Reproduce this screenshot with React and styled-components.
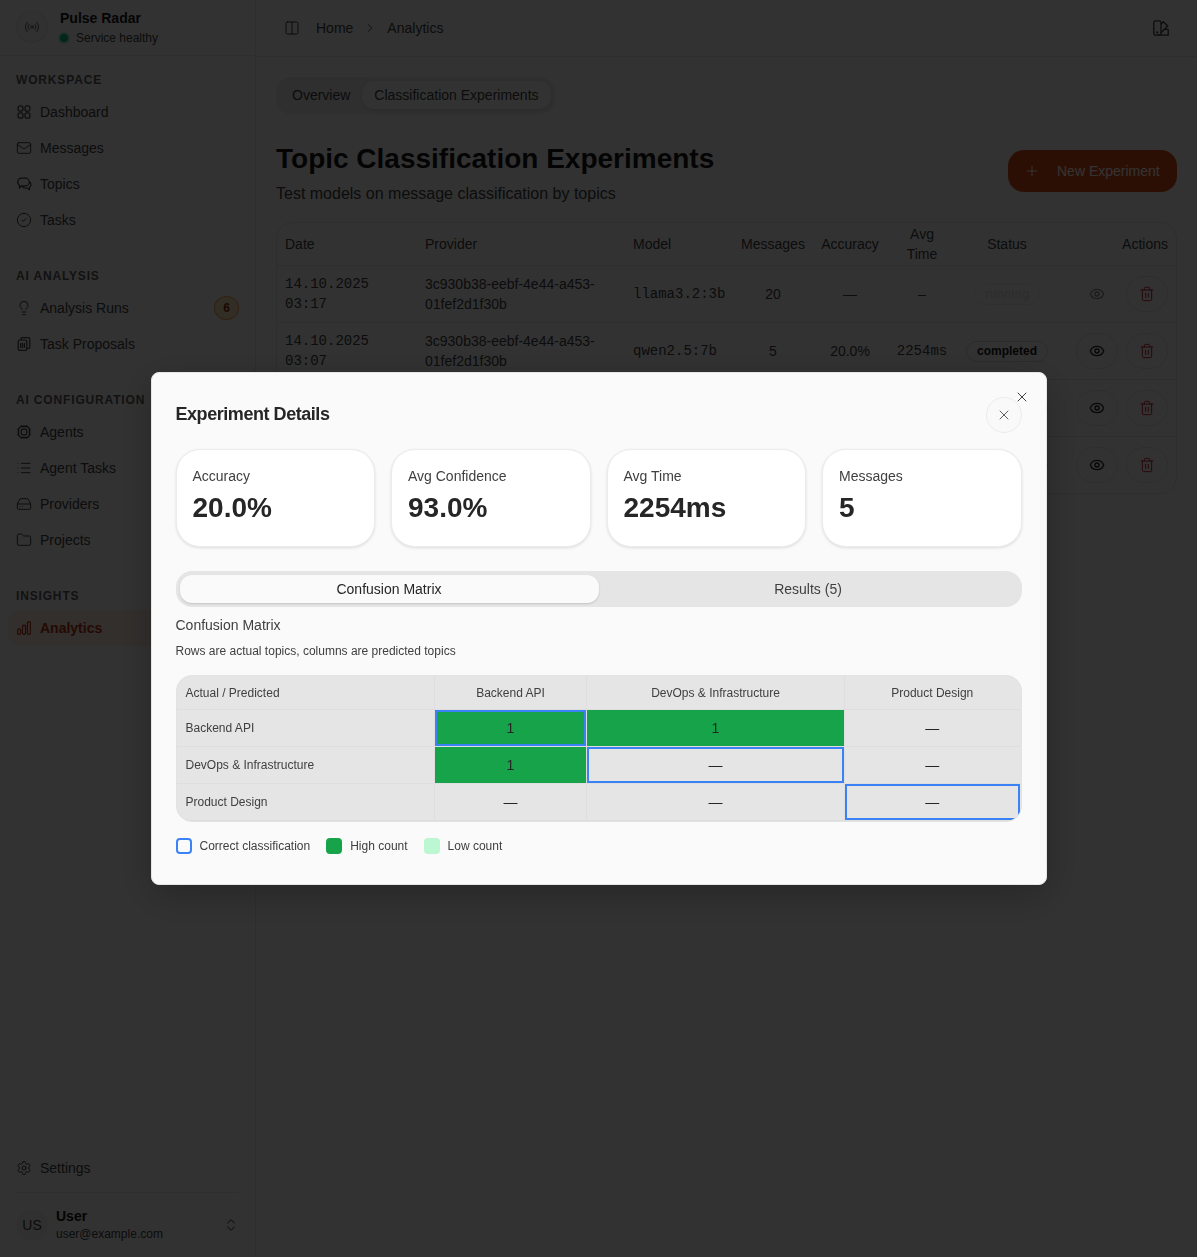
import React from 'react'
import styled, { createGlobalStyle } from 'styled-components'
import {
  Mail, CircleCheck, Lightbulb, List, HardDrive, Folder, Settings, ChevronsUpDown,
  ChevronRight, Columns2, Plus, Eye, Trash2, X, Radio,
} from 'lucide-react'

const Global = createGlobalStyle`
  html, body { margin: 0; padding: 0; height: 100%; }
  body {
    background: #fafafa;
    color: #262626;
    font-family: "Liberation Sans", Arial, sans-serif;
    overflow: hidden;
  }
  * { box-sizing: border-box; }
`

const Shell = styled.div`
  display: flex;
  height: 1257px;
`

const Sidebar = styled.aside`
  width: 256px;
  flex: none;
  display: flex;
  flex-direction: column;
  border-right: 1px solid #e5e5e5;
`

const Brand = styled.div`
  height: 56px;
  padding: 11px 16px 0;
  display: flex;
  gap: 12px;
  border-bottom: 1px solid #e5e5e5;
`

const LogoCircle = styled.div`
  width: 32px;
  height: 32px;
  border-radius: 50%;
  background: #f5f5f5;
  border: 1px solid #f2dcd4;
  display: flex;
  align-items: center;
  justify-content: center;
  color: #404040;
`

const BrandText = styled.div`
  display: flex;
  flex-direction: column;
  margin-top: -1px;
`

const BrandName = styled.div`
  font-size: 14px;
  line-height: 16px;
  font-weight: 700;
  color: #171717;
`

const Health = styled.div`
  display: flex;
  align-items: center;
  gap: 8px;
  font-size: 12px;
  line-height: 16px;
  margin-top: 4px;
  color: #404040;
`

const HealthDot = styled.span`
  width: 8px;
  height: 8px;
  border-radius: 50%;
  background: #10b981;
  box-shadow: 0 0 0 2px #a7f3d0;
`

const NavArea = styled.nav`
  display: flex;
  flex-direction: column;
  padding-top: 16px;
`

const Group = styled.div`
  margin-bottom: 30px;
`

const GroupLabel = styled.div`
  height: 16px;
  line-height: 16px;
  padding-left: 16px;
  font-size: 12px;
  font-weight: 700;
  letter-spacing: 0.84px;
  color: #5c5c5c;
  margin-bottom: 6px;
  white-space: nowrap;
`

const NavItem = styled.div`
  height: 36px;
  margin: 0 8px;
  padding: 0 8px;
  border-radius: 12px;
  display: flex;
  align-items: center;
  gap: 8px;
  font-size: 14px;
  color: ${p => (p.$active ? '#b8330f' : '#404040')};
  font-weight: ${p => (p.$active ? 700 : 400)};
  background: ${p => (p.$active ? '#f9e8e1' : 'transparent')};
`

const CountBadge = styled.span`
  margin-left: auto;
  width: 25px;
  height: 24px;
  border-radius: 50%;
  background: #f59e0b44;
  border: 1px solid #f97316aa;
  font-size: 12px;
  font-weight: 700;
  color: #7c2d12;
  display: flex;
  align-items: center;
  justify-content: center;
`

const SideFooter = styled.div`
  margin-top: auto;
  padding-bottom: 14px;
`

const FooterRule = styled.div`
  height: 1px;
  margin: 6px 16px 14px;
  background: #e5e5e5;
`

const UserRow = styled.div`
  display: flex;
  align-items: center;
  padding: 0 16px;
  gap: 8px;
`

const Avatar = styled.div`
  width: 32px;
  height: 32px;
  border-radius: 50%;
  background: #f0f0f0;
  font-size: 14px;
  color: #404040;
  display: flex;
  align-items: center;
  justify-content: center;
`

const UserText = styled.div`
  flex: 1;
  display: flex;
  flex-direction: column;
`

const UserName = styled.div`
  font-size: 14px;
  line-height: 18px;
  font-weight: 700;
  color: #171717;
`

const UserMail = styled.div`
  font-size: 12px;
  line-height: 18px;
  color: #404040;
`

const Main = styled.main`
  flex: 1;
  min-width: 0;
  display: flex;
  flex-direction: column;
`

const TopBar = styled.header`
  height: 57px;
  flex: none;
  padding: 0 28px;
  display: flex;
  align-items: center;
  border-bottom: 1px solid #e5e5e5;
  color: #404040;
  font-size: 14px;
`

const Crumbs = styled.div`
  display: flex;
  align-items: center;
  margin-left: 16px;
  gap: 10px;
  flex: 1;
`

const Content = styled.div`
  padding: 20px 20px 0;
`

const PageTabs = styled.div`
  display: inline-flex;
  padding: 4px;
  height: 36px;
  border-radius: 16px;
  background: #e8e8e8;
  box-shadow: 0 1px 3px rgba(0, 0, 0, 0.1);
`

const PageTab = styled.div`
  padding: 0 12px;
  display: flex;
  align-items: center;
  font-size: 14px;
  border-radius: 12px;
  color: #404040;
  background: ${p => (p.$active ? '#fafafa' : 'transparent')};
  box-shadow: ${p => (p.$active ? '0 1px 3px rgba(0,0,0,.12)' : 'none')};
`

const TitleRow = styled.div`
  display: flex;
  align-items: flex-start;
  justify-content: space-between;
  margin-top: 30px;
`

const PageTitle = styled.h1`
  margin: 0;
  font-size: 28px;
  line-height: 32px;
  font-weight: 700;
  color: #171717;
`

const PageSub = styled.p`
  margin: 7px 0 0;
  font-size: 16px;
  line-height: 24px;
  color: #404040;
`

const NewButton = styled.div`
  margin-top: 7px;
  height: 42px;
  width: 169px;
  padding: 0 16px;
  border-radius: 16px;
  background: #dc4c14;
  color: #fff;
  font-size: 14px;
  display: flex;
  align-items: center;
  gap: 17px;
`

const TableCard = styled.div`
  margin-top: 16px;
  border: 1px solid #e5e5e5;
  border-radius: 16px;
  overflow: hidden;
`

const DataTable = styled.table`
  width: 100%;
  table-layout: fixed;
  border-collapse: collapse;
  font-size: 14px;
  color: #404040;
`

const Th = styled.th`
  height: 42px;
  padding: 0 ${p => (p.$align === 'right' ? '9px' : '8px')} 0 8px;
  font-weight: 400;
  line-height: 20px;
  text-align: ${p => p.$align || 'center'};
  border-bottom: 1px solid #e5e5e5;
`

const Td = styled.td`
  height: 57px;
  padding: 8px ${p => (p.$actions ? '9px' : '8px')} 8px 8px;
  line-height: 20px;
  text-align: ${p => p.$align || 'center'};
  border-bottom: ${p => (p.$last ? 'none' : '1px solid #e5e5e5')};
  font-family: ${p => (p.$mono ? '"Liberation Mono", monospace' : 'inherit')};
  white-space: ${p => (p.$nowrap ? 'nowrap' : 'normal')};
  overflow-wrap: anywhere;
`

const StatusPill = styled.span`
  display: inline-block;
  padding: 2px 10px;
  height: 21px;
  line-height: 15px;
  border: 1px solid #d4d4d4;
  border-radius: 999px;
  font-size: 12px;
  font-weight: 700;
  color: ${p => (p.$dim ? '#c4c4c4' : '#171717')};
  opacity: ${p => (p.$dim ? 0.4 : 1)};
`

const Actions = styled.div`
  display: flex;
  justify-content: flex-end;
  gap: 8px;
`

const IconBtn = styled.div`
  width: 42px;
  height: 36px;
  border-radius: 18px;
  border: 1px solid ${p => (p.$off ? 'transparent' : '#e3e3e3')};
  display: flex;
  align-items: center;
  justify-content: center;
  color: ${p => (p.$danger ? '#c81e2e' : '#262626')};
  opacity: ${p => (p.$off ? 0.5 : 1)};
`

const Overlay = styled.div`
  position: fixed;
  inset: 0;
  background: rgba(0, 0, 0, 0.8);
  display: flex;
  align-items: center;
  justify-content: center;
`

const Dialog = styled.div`
  position: relative;
  width: 896px;
  height: 513px;
  padding: 24px;
  border-radius: 8px;
  background: #fafafa;
  border: 1px solid #e5e5e5;
  box-shadow: 0 10px 40px rgba(0, 0, 0, 0.25);
`

const CornerClose = styled.div`
  position: absolute;
  top: 16px;
  right: 16px;
  width: 16px;
  height: 16px;
  display: flex;
  color: #404040;
`

const DialogHead = styled.div`
  display: flex;
  align-items: center;
  justify-content: space-between;
  height: 36px;
`

const DialogTitle = styled.h2`
  margin: 0 0 1px;
  font-size: 18px;
  font-weight: 700;
  letter-spacing: -0.45px;
  color: #262626;
`

const RoundClose = styled.div`
  width: 36px;
  height: 36px;
  border-radius: 50%;
  background: #f9f9f9;
  border: 1px solid #ececec;
  display: flex;
  align-items: center;
  justify-content: center;
  color: #404040;
`

const Stats = styled.div`
  display: grid;
  grid-template-columns: repeat(4, 1fr);
  gap: 16px;
  margin-top: 16px;
`

const StatCard = styled.div`
  height: 98px;
  padding: 16px;
  border-radius: 24px;
  background: #fff;
  border: 1px solid #ececec;
  box-shadow: 0 1px 3px rgba(0, 0, 0, 0.12);
`

const StatLabel = styled.div`
  font-size: 14px;
  line-height: 20px;
  color: #404040;
`

const StatValue = styled.div`
  font-size: 28px;
  line-height: 32px;
  font-weight: 700;
  margin-top: 6px;
  color: #262626;
`

const DialogTabs = styled.div`
  display: grid;
  grid-template-columns: 1fr 1fr;
  height: 36px;
  padding: 4px;
  margin-top: 24px;
  border-radius: 16px;
  background: #e5e5e5;
`

const DialogTab = styled.div`
  display: flex;
  align-items: center;
  justify-content: center;
  font-size: 14px;
  border-radius: 12px;
  color: ${p => (p.$active ? '#262626' : '#404040')};
  background: ${p => (p.$active ? '#fafafa' : 'transparent')};
  box-shadow: ${p => (p.$active ? '0 1px 2px rgba(0,0,0,.15)' : 'none')};
`

const MatrixTitle = styled.div`
  margin-top: 10px;
  font-size: 14px;
  line-height: 16px;
  color: #404040;
`

const MatrixSub = styled.div`
  margin-top: 10px;
  font-size: 12px;
  line-height: 16px;
  color: #404040;
`

const MatrixWrap = styled.div`
  margin-top: 16px;
  width: 846px;
  border: 1px solid #e2e2e2;
  border-radius: 16px;
  overflow: hidden;
  background: #e5e5e5;
`

const Matrix = styled.table`
  width: 843px;
  table-layout: fixed;
  border-collapse: collapse;
  font-size: 12px;
  color: #404040;
`

const MatrixHead = styled.th`
  height: 33px;
  padding: 1px 9px 0;
  font-weight: 400;
  text-align: ${p => (p.$left ? 'left' : 'center')};
  border-left: ${p => (p.$left ? 'none' : '1px solid #dedede')};
  border-bottom: 1px solid #dedede;
`

const RowHead = styled.td`
  height: 37px;
  padding: 0 9px;
  border-bottom: 1px solid #dedede;
`

const Cell = styled.td`
  height: 37px;
  padding: 0;
  text-align: center;
  font-size: 14px;
  color: #262626;
  border-left: 1px solid #dedede;
  border-bottom: 1px solid #dedede;
  background: ${p => (p.$count ? '#16a34a' : 'transparent')};
  box-shadow: ${p => (p.$correct ? 'inset 0 0 0 2px #3b82f6' : 'none')};
`

const Legend = styled.div`
  display: flex;
  align-items: center;
  gap: 16px;
  margin-top: 16px;
  font-size: 12px;
  color: #404040;
`

const LegendItem = styled.div`
  display: flex;
  align-items: center;
  gap: 8px;
`

const Swatch = styled.span`
  width: 16px;
  height: 16px;
  border-radius: 4px;
  background: ${p => p.$fill};
  border: 2px solid ${p => p.$line};
`

// hand drawn where lucide has no close match
const DashIcon = () => (
  <svg width="16" height="16" viewBox="0 0 16 16" fill="none" stroke="currentColor" strokeWidth="1.2">
    <rect x="2" y="1.8" width="5" height="5.4" rx="2" />
    <rect x="9" y="1.8" width="5" height="5.4" rx="2" />
    <rect x="2" y="8.8" width="5" height="5.4" rx="2" />
    <rect x="9" y="8.8" width="5" height="5.4" rx="2" />
  </svg>
)

const TopicsIcon = () => (
  <svg width="16" height="16" viewBox="0 0 16 16" fill="none" stroke="currentColor" strokeWidth="1.2" strokeLinejoin="round">
    <path d="M5.6 2.2h3.9a3.8 3.8 0 0 1 0 7.6H5.8l-2.3 2.2V9.2A3.8 3.8 0 0 1 5.6 2.2z" />
    <path d="M6.2 9.9c.4 1.3 1.5 2.1 2.9 2.1h2l2.4 1.8v-2.4c.9-.6 1.5-1.6 1.5-2.8 0-1.3-.7-2.4-1.8-3" />
  </svg>
)

const ProposalIcon = () => (
  <svg width="16" height="16" viewBox="0 0 16 16" fill="none" stroke="currentColor" strokeWidth="1.2">
    <rect x="2.2" y="4" width="8.6" height="10.4" rx="1.4" />
    <path d="M5 4V2.8c0-.7.5-1.2 1.2-1.2h6c.9 0 1.6.7 1.6 1.6v8c0 .7-.5 1.2-1.2 1.2h-1.8" />
    <path d="M4.6 7v5M6.5 7v5M8.4 7v5" />
  </svg>
)

const AgentIcon = () => (
  <svg width="16" height="16" viewBox="0 0 16 16" fill="none" stroke="currentColor" strokeWidth="1.2">
    <rect x="2.6" y="2.6" width="10.8" height="10.8" rx="3" />
    <rect x="5.2" y="5.2" width="5.6" height="5.6" rx="1.6" />
    <path d="M5.5 1v1.6M8 1v1.6M10.5 1v1.6M5.5 13.4V15M8 13.4V15M10.5 13.4V15M1 5.5h1.6M1 8h1.6M1 10.5h1.6M13.4 5.5H15M13.4 8H15M13.4 10.5H15" />
  </svg>
)

const BarsIcon = () => (
  <svg width="16" height="16" viewBox="0 0 16 16" fill="none" stroke="currentColor" strokeWidth="1.2">
    <rect x="1.6" y="8.8" width="3" height="5.6" rx="1.4" />
    <rect x="6.5" y="5.2" width="3" height="9.2" rx="1.4" />
    <rect x="11.4" y="1.6" width="3" height="12.8" rx="1.4" />
  </svg>
)

const SwatchIcon = () => (
  <svg width="16" height="16" viewBox="0 0 16 16" fill="none" stroke="currentColor" strokeWidth="1.3" strokeLinejoin="round">
    <rect x="0.8" y="0.8" width="7.2" height="14.4" rx="1.6" />
    <path d="M8 4.4 10.4 1.8 14.6 6 8 12.8" />
    <path d="M11.4 9.4h3.8v5.8H4.4" />
    <circle cx="4.2" cy="12.4" r="0.5" fill="currentColor" />
  </svg>
)

const navGroups = [
  {
    label: 'WORKSPACE',
    items: [
      { name: 'Dashboard', icon: <DashIcon /> },
      { name: 'Messages', icon: <Mail size={16} strokeWidth={1.5} /> },
      { name: 'Topics', icon: <TopicsIcon /> },
      { name: 'Tasks', icon: <CircleCheck size={16} strokeWidth={1.5} /> },
    ],
  },
  {
    label: 'AI ANALYSIS',
    items: [
      { name: 'Analysis Runs', icon: <Lightbulb size={16} strokeWidth={1.5} />, badge: 6 },
      { name: 'Task Proposals', icon: <ProposalIcon /> },
    ],
  },
  {
    label: 'AI CONFIGURATION',
    items: [
      { name: 'Agents', icon: <AgentIcon /> },
      { name: 'Agent Tasks', icon: <List size={16} strokeWidth={1.5} /> },
      { name: 'Providers', icon: <HardDrive size={16} strokeWidth={1.5} /> },
      { name: 'Projects', icon: <Folder size={16} strokeWidth={1.5} /> },
    ],
  },
  {
    label: 'INSIGHTS',
    items: [{ name: 'Analytics', icon: <BarsIcon />, active: true }],
  },
]

const experiments = [
  { date: '14.10.2025 03:17', model: 'llama3.2:3b', messages: 20, accuracy: '—', time: '–', status: 'running', off: true },
  { date: '14.10.2025 03:07', model: 'qwen2.5:7b', messages: 5, accuracy: '20.0%', time: '2254ms', status: 'completed' },
  { date: '14.10.2025 02:58', model: 'qwen2.5:7b', messages: 5, accuracy: '20.0%', time: '2254ms', status: 'completed' },
  { date: '14.10.2025 02:41', model: 'llama3.2:3b', messages: 5, accuracy: '20.0%', time: '2254ms', status: 'completed' },
]

const stats = [
  ['Accuracy', '20.0%'],
  ['Avg Confidence', '93.0%'],
  ['Avg Time', '2254ms'],
  ['Messages', '5'],
]

const topics = ['Backend API', 'DevOps & Infrastructure', 'Product Design']
const counts = [
  [1, 1, 0],
  [1, 0, 0],
  [0, 0, 0],
]

export default function App() {
  return (
    <>
      <Global />
      <Shell>
        <Sidebar>
          <Brand>
            <LogoCircle><Radio size={16} strokeWidth={1.25} /></LogoCircle>
            <BrandText>
              <BrandName>Pulse Radar</BrandName>
              <Health><HealthDot />Service healthy</Health>
            </BrandText>
          </Brand>
          <NavArea>
            {navGroups.map(group => (
              <Group key={group.label}>
                <GroupLabel>{group.label}</GroupLabel>
                {group.items.map(item => (
                  <NavItem key={item.name} $active={item.active}>
                    {item.icon}
                    {item.name}
                    {item.badge && <CountBadge>{item.badge}</CountBadge>}
                  </NavItem>
                ))}
              </Group>
            ))}
          </NavArea>
          <SideFooter>
            <NavItem><Settings size={16} strokeWidth={1.5} />Settings</NavItem>
            <FooterRule />
            <UserRow>
              <Avatar>US</Avatar>
              <UserText>
                <UserName>User</UserName>
                <UserMail>user@example.com</UserMail>
              </UserText>
              <ChevronsUpDown size={16} strokeWidth={1.5} />
            </UserRow>
          </SideFooter>
        </Sidebar>
        <Main>
          <TopBar>
            <Columns2 size={16} strokeWidth={1.5} />
            <Crumbs>
              <span>Home</span>
              <ChevronRight size={14} strokeWidth={1.5} />
              <span>Analytics</span>
            </Crumbs>
            <SwatchIcon />
          </TopBar>
          <Content>
            <PageTabs>
              <PageTab>Overview</PageTab>
              <PageTab $active>Classification Experiments</PageTab>
            </PageTabs>
            <TitleRow>
              <div>
                <PageTitle>Topic Classification Experiments</PageTitle>
                <PageSub>Test models on message classification by topics</PageSub>
              </div>
              <NewButton><Plus size={16} strokeWidth={1.5} />New Experiment</NewButton>
            </TitleRow>
            <TableCard>
              <DataTable>
                <colgroup>
                  <col style={{ width: 140 }} />
                  <col style={{ width: 208 }} />
                  <col style={{ width: 108 }} />
                  <col style={{ width: 80 }} />
                  <col style={{ width: 74 }} />
                  <col style={{ width: 70 }} />
                  <col style={{ width: 100 }} />
                  <col style={{ width: 120 }} />
                </colgroup>
                <thead>
                  <tr>
                    <Th $align="left">Date</Th>
                    <Th $align="left">Provider</Th>
                    <Th $align="left">Model</Th>
                    <Th>Messages</Th>
                    <Th>Accuracy</Th>
                    <Th>Avg Time</Th>
                    <Th>Status</Th>
                    <Th $align="right">Actions</Th>
                  </tr>
                </thead>
                <tbody>
                  {experiments.map((row, i) => {
                    const last = i === experiments.length - 1
                    return (
                      <tr key={row.date}>
                        <Td $align="left" $mono $last={last}>{row.date}</Td>
                        <Td $align="left" $last={last}>3c930b38-eebf-4e44-a453-01fef2d1f30b</Td>
                        <Td $align="left" $mono $nowrap $last={last}>{row.model}</Td>
                        <Td $last={last}>{row.messages}</Td>
                        <Td $last={last}>{row.accuracy}</Td>
                        <Td $mono={row.time !== '–'} $last={last}>{row.time}</Td>
                        <Td $last={last}><StatusPill $dim={row.off}>{row.status}</StatusPill></Td>
                        <Td $actions $last={last}>
                          <Actions>
                            <IconBtn $off={row.off}><Eye size={16} /></IconBtn>
                            <IconBtn $danger><Trash2 size={16} strokeWidth={1.5} /></IconBtn>
                          </Actions>
                        </Td>
                      </tr>
                    )
                  })}
                </tbody>
              </DataTable>
            </TableCard>
          </Content>
        </Main>
      </Shell>
      <Overlay>
        <Dialog>
          <CornerClose><X size={16} strokeWidth={1.5} /></CornerClose>
          <DialogHead>
            <DialogTitle>Experiment Details</DialogTitle>
            <RoundClose><X size={16} strokeWidth={1.25} /></RoundClose>
          </DialogHead>
          <Stats>
            {stats.map(([label, value]) => (
              <StatCard key={label}>
                <StatLabel>{label}</StatLabel>
                <StatValue>{value}</StatValue>
              </StatCard>
            ))}
          </Stats>
          <DialogTabs>
            <DialogTab $active>Confusion Matrix</DialogTab>
            <DialogTab>Results (5)</DialogTab>
          </DialogTabs>
          <MatrixTitle>Confusion Matrix</MatrixTitle>
          <MatrixSub>Rows are actual topics, columns are predicted topics</MatrixSub>
          <MatrixWrap>
            <Matrix>
              <colgroup>
                <col style={{ width: 258 }} />
                <col style={{ width: 152 }} />
                <col style={{ width: 258 }} />
                <col style={{ width: 175 }} />
              </colgroup>
              <thead>
                <tr>
                  <MatrixHead $left>Actual / Predicted</MatrixHead>
                  {topics.map(topic => <MatrixHead key={topic}>{topic}</MatrixHead>)}
                </tr>
              </thead>
              <tbody>
                {topics.map((topic, r) => (
                  <tr key={topic}>
                    <RowHead>{topic}</RowHead>
                    {counts[r].map((count, c) => (
                      <Cell key={c} $count={count > 0} $correct={r === c}>{count || '—'}</Cell>
                    ))}
                  </tr>
                ))}
              </tbody>
            </Matrix>
          </MatrixWrap>
          <Legend>
            <LegendItem><Swatch $fill="transparent" $line="#3b82f6" />Correct classification</LegendItem>
            <LegendItem><Swatch $fill="#16a34a" $line="#16a34a" />High count</LegendItem>
            <LegendItem><Swatch $fill="#bbf7d0" $line="#bbf7d0" />Low count</LegendItem>
          </Legend>
        </Dialog>
      </Overlay>
    </>
  )
}
